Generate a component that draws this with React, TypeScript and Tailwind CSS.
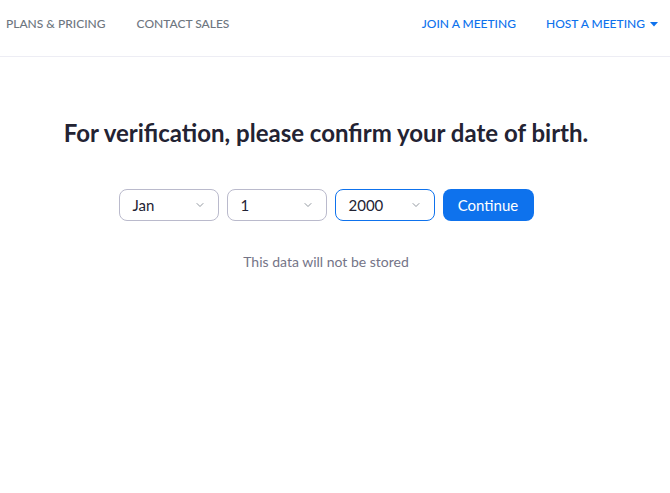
import { ChevronDown } from "lucide-react";

function Select({ value, active }: { value: string; active?: boolean }) {
  return (
    <div
      className={`flex h-8 w-[100px] items-center justify-between rounded-lg border bg-white pl-[13px] pr-[12px] text-[15px] text-[#232333] ${
        active ? "border-[#0e72ed]" : "border-[#babacc]"
      }`}
    >
      <span>{value}</span>
      <ChevronDown className="h-3 w-3 text-[#6e7680]" strokeWidth={1.5} />
    </div>
  );
}

export default function App() {
  return (
    <div className="min-h-screen bg-white font-['Lato','Noto_Sans',sans-serif]">
      {/* Top nav */}
      <header className="flex h-[57px] items-center justify-between border-b border-[#ededf4] pl-[6px] pr-[12px] pb-[8px] text-[12px] font-medium">
        <nav className="flex gap-[31px] text-[#6e7680]">
          <span>PLANS &amp; PRICING</span>
          <span>CONTACT SALES</span>
        </nav>
        <nav className="flex items-center gap-[30px] text-[#0e72ed]">
          <span>JOIN A MEETING</span>
          <span className="flex items-center gap-[5px]">
            HOST A MEETING
            <svg width="8" height="5" viewBox="0 0 8 5" className="fill-[#0e72ed]">
              <path d="M0 0h8L4 4.5z" />
            </svg>
          </span>
        </nav>
      </header>

      <main className="flex w-[652px] flex-col items-center pt-[58px]">
        <h1 className="text-[24px] font-bold text-[#232333]">
          For verification, please confirm your date of birth.
        </h1>
        <div className="mt-[38px] flex gap-2">
          <Select value="Jan" />
          <Select value="1" />
          <Select value="2000" active />
          <button className="h-8 w-[91px] rounded-lg bg-[#0e72ed] text-[15px] text-white">
            Continue
          </button>
        </div>
        <p className="mt-[30px] text-[14px] text-[#747487]">This data will not be stored</p>
      </main>
    </div>
  );
}
